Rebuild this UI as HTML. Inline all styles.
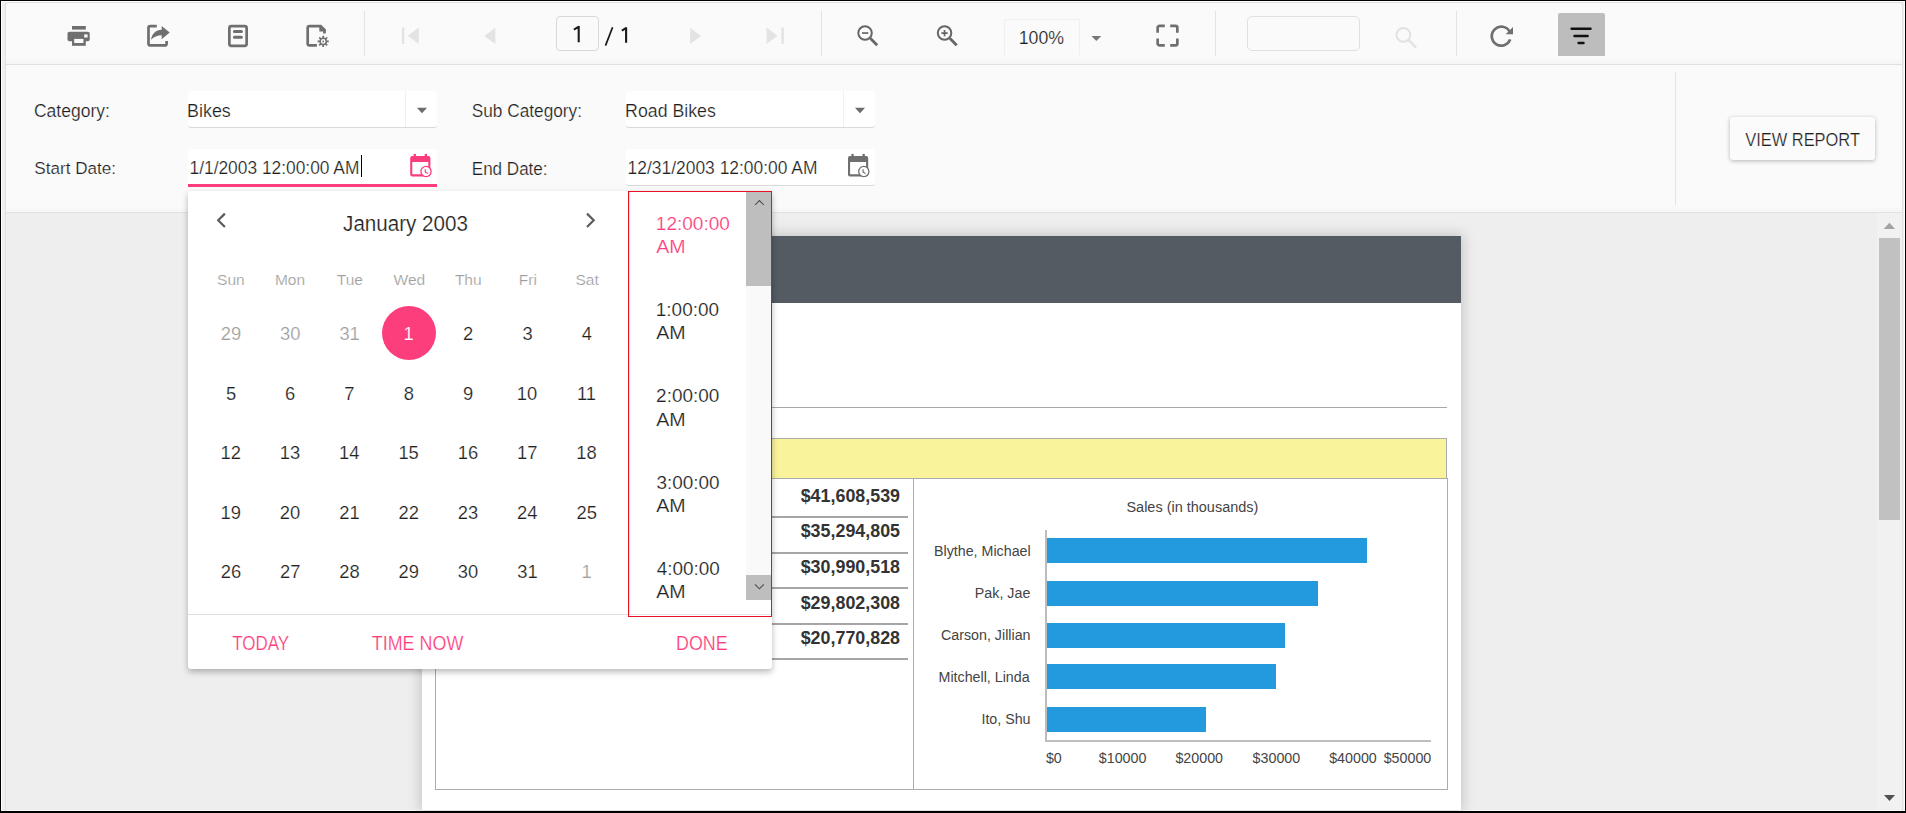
<!DOCTYPE html>
<html><head><meta charset="utf-8">
<style>
html,body{margin:0;padding:0}
body{width:1906px;height:813px;background:#000;position:relative;overflow:hidden;font-family:"Liberation Sans",sans-serif;color:#222}
.a{position:absolute}
.t{position:absolute;white-space:pre;line-height:1}
svg{position:absolute;overflow:visible}
.sep{position:absolute;width:1px;top:11px;height:45px;background:#e3e3e3}
</style></head><body>
<div class="a" style="left:1px;top:1px;width:1904px;height:810px;background:#fff"></div>
<div class="a" style="left:2px;top:2px;width:1902px;height:808px;background:#efefef"></div>
<div class="a" style="left:5px;top:2px;width:1896px;height:808px;border:1px solid #e0e0e0;border-bottom:0;border-radius:3px 3px 0 0;background:#fafafa"></div>
<div class="a" style="left:6px;top:58px;width:1896px;height:6px;background:linear-gradient(rgba(0,0,0,0),rgba(0,0,0,.025))"></div>
<div class="a" style="left:6px;top:64px;width:1896px;height:1px;background:#e0e0e0"></div>
<div class="a" style="left:6px;top:206px;width:1896px;height:6px;background:linear-gradient(rgba(0,0,0,0),rgba(0,0,0,.02))"></div>
<div class="a" style="left:6px;top:212px;width:1896px;height:1px;background:#e2e2e2"></div>
<div class="a" style="left:6px;top:213px;width:1896px;height:597px;background:#eeeeee"></div>
<!-- TOOLBAR CONTENT -->
<svg class="a" style="left:0;top:0" width="1906" height="70" viewBox="0 0 1906 70">
<g fill="#6f6f6f">
<!-- printer -->
<rect x="72" y="26" width="13.8" height="3.6"/>
<rect x="67.5" y="31.8" width="22.2" height="9.5" rx="1.8"/>
<rect x="72" y="38.5" width="13.8" height="7.3"/>
<rect x="74.2" y="38.9" width="9.2" height="4.1" fill="#fafafa"/>
<rect x="84.2" y="34.4" width="3.4" height="3.1" fill="#fafafa"/>
<!-- export arrow -->
<path d="M161.7,29.8 C156,30 152,33.5 151,39.8 C154,37 157.5,35.3 161.7,35.3 V39.3 L169.7,32.6 L161.7,25.9 Z"/>
</g>
<g fill="none" stroke="#6f6f6f" stroke-width="2.7">
<path d="M156.8,26.1 H150.1 a1.6,1.6 0 0 0 -1.6,1.6 V43.8 a1.6,1.6 0 0 0 1.6,1.6 H165 a1.6,1.6 0 0 0 1.6,-1.6 V41"/>
<rect x="229.35" y="26.05" width="17.3" height="19.8" rx="2"/>
<path d="M234.4,31.5 H241.4 M234.4,37.3 H241.4" stroke-width="3" stroke-linecap="round"/>
<path d="M316.9,45.45 H309.4 a1.7,1.7 0 0 1 -1.7,-1.7 V27.75 a1.7,1.7 0 0 1 1.7,-1.7 H320.6 L324.45,29.9 V33.6"/>
</g>
<path d="M319.3,25.5 L325.8,30.6 V31.6 H319.3 Z" fill="#6f6f6f"/>
<!-- gear -->
<g transform="translate(323.2,41.4)">
<circle r="5.2" fill="#fafafa"/>
<g stroke="#6f6f6f" stroke-width="1.7">
<path d="M0,-5.6 V-3.4 M0,5.6 V3.4 M-5.6,0 H-3.4 M5.6,0 H3.4 M-3.96,-3.96 L-2.4,-2.4 M3.96,3.96 L2.4,2.4 M-3.96,3.96 L-2.4,2.4 M3.96,-3.96 L2.4,-2.4"/>
</g>
<circle r="3.1" fill="none" stroke="#6f6f6f" stroke-width="1.5"/>
<circle r="0.9" fill="#6f6f6f"/>
</g>
<!-- nav disabled -->
<g fill="#e3e3e3">
<rect x="401.9" y="27.5" width="2.4" height="16.5"/>
<path d="M418.8,27.5 L407.8,35.75 L418.8,44 Z"/>
<path d="M495.4,27.8 L484.3,35.9 L495.4,44 Z"/>
<path d="M690.1,27.8 L701.2,35.9 L690.1,44 Z"/>
<path d="M766.5,27.5 L777.5,35.75 L766.5,44 Z"/>
<rect x="781.4" y="27.5" width="2.4" height="16.5"/>
</g>
<!-- zoom out / in -->
<g fill="none" stroke="#666" >
<circle cx="865.05" cy="33.05" r="6.75" stroke-width="2"/>
<path d="M862,33.05 H868.3" stroke-width="1.7"/>
<path d="M870.3,38.3 L877.2,45.2" stroke-width="2.8"/>
<circle cx="944.55" cy="33.05" r="6.75" stroke-width="2"/>
<path d="M941.4,33.05 H947.7 M944.55,29.9 V36.2" stroke-width="1.7"/>
<path d="M949.8,38.3 L956.7,45.2" stroke-width="2.8"/>
</g>
<!-- fit page -->
<g fill="none" stroke="#6f6f6f" stroke-width="2.7">
<path d="M1164.8,25.85 H1159.6 a1.95,1.95 0 0 0 -1.95,1.95 V32.8"/>
<path d="M1170.2,25.85 H1175.4 a1.95,1.95 0 0 1 1.95,1.95 V32.8"/>
<path d="M1164.8,45.35 H1159.6 a1.95,1.95 0 0 1 -1.95,-1.95 V38.4"/>
<path d="M1170.2,45.35 H1175.4 a1.95,1.95 0 0 0 1.95,-1.95 V38.4"/>
</g>
<!-- search -->
<g fill="none" stroke="#e2e2e2">
<circle cx="1403.4" cy="34.8" r="6.9" stroke-width="2"/>
<path d="M1408.6,40 L1416.2,47.6" stroke-width="2.4"/>
</g>
<!-- refresh -->
<path d="M1510.2,39.4 A9.5,9.5 0 1 1 1509.6,31.6" fill="none" stroke="#6f6f6f" stroke-width="2.7"/>
<path d="M1513,26.9 V34.2 H1505.7 Z" fill="#6f6f6f"/>
</svg>
<div class="sep" style="left:364px"></div>
<div class="sep" style="left:821px"></div>
<div class="sep" style="left:1215px"></div>
<div class="sep" style="left:1456px"></div>
<div class="a" style="left:556px;top:16px;width:41px;height:33px;border:1px solid #d9d9d9;border-radius:4px"></div>
<div class="a" style="left:1004px;top:19px;width:74px;height:35px;border:1px solid #efefef;border-bottom:0"></div>
<svg class="a" style="left:0;top:0" width="1906" height="70"><path d="M1091.5,36 H1101.2 L1096.35,40.9 Z" fill="#777"/></svg>
<div class="a" style="left:1247px;top:16px;width:111px;height:33px;border:1px solid #e0e0e0;border-radius:5px"></div>
<div class="a" style="left:1558px;top:13px;width:47px;height:43px;background:#bdbdbd;border-radius:2px 2px 0 0"></div>
<svg class="a" style="left:0;top:0" width="1906" height="70"><g stroke="#111" stroke-width="2.5" stroke-linecap="round"><path d="M1571.6,28.75 H1590.5 M1574.5,35.9 H1587.6 M1578.6,42.95 H1583.5"/></g></svg>


<svg class="a" style="left:0;top:0" width="10" height="10"><g fill="none" stroke="#1a1a1a" stroke-width="2.1"><path d="M578.7,26 V42.2 M578.9,26.6 L573.9,29.6"/><path d="M626.1,27.2 V42.8 M626.3,27.8 L621.9,30.6"/><path d="M612.6,27.3 L605.5,45.6" stroke-width="1.7"/></g></svg>
<div class="a" style="left:188px;top:91px;width:249px;height:36px;background:#fff;border-radius:3px;box-shadow:0 1px 0 #d9d9d9"></div>
<div class="a" style="left:405px;top:91px;width:1px;height:36px;background:#f0f0f0"></div>
<div class="a" style="left:626px;top:91px;width:249px;height:36px;background:#fff;border-radius:3px;box-shadow:0 1px 0 #d9d9d9"></div>
<div class="a" style="left:843px;top:91px;width:1px;height:36px;background:#f0f0f0"></div>
<svg class="a" style="left:0;top:0" width="10" height="10"><path d="M416.9,107.8 H427.1 L422,113.3 Z M854.9,107.8 H865.1 L860,113.3 Z" fill="#6d6d6d"/></svg>
<div class="a" style="left:188px;top:149px;width:249px;height:35px;background:#fff"></div>
<div class="a" style="left:188px;top:184px;width:249px;height:3px;background:#fc3d7b"></div>
<div class="a" style="left:626px;top:149px;width:249px;height:36px;background:#fff;border-radius:3px;box-shadow:0 1px 0 #d9d9d9"></div>
<div class="a" style="left:360.6px;top:155px;width:1.6px;height:22px;background:#000"></div>
<svg class="a" style="left:0;top:0" width="10" height="10"><g transform="translate(410.2,153.9)">
<rect x="3.4" y="0" width="2.3" height="3" fill="#fc3d7b"/><rect x="14.5" y="0" width="2.3" height="3" fill="#fc3d7b"/>
<path d="M2,2.1 H18.2 a2,2 0 0 1 2,2 V20.5 a2,2 0 0 1 -2,2 H2 a2,2 0 0 1 -2,-2 V4.1 a2,2 0 0 1 2,-2 Z M2.1,8.1 V20.4 H18.1 V8.1 Z" fill="#fc3d7b" fill-rule="evenodd"/>
<circle cx="15.8" cy="17.6" r="5.1" fill="#fff" stroke="#fc3d7b" stroke-width="1.3"/>
<path d="M15.1,15.3 V18.3 L17.6,19.6" fill="none" stroke="#fc3d7b" stroke-width="1.2"/>
</g></svg>

<svg class="a" style="left:0;top:0" width="10" height="10"><g transform="translate(848,153.9)">
<rect x="3.4" y="0" width="2.3" height="3" fill="#6f6f6f"/><rect x="14.5" y="0" width="2.3" height="3" fill="#6f6f6f"/>
<path d="M2,2.1 H18.2 a2,2 0 0 1 2,2 V20.5 a2,2 0 0 1 -2,2 H2 a2,2 0 0 1 -2,-2 V4.1 a2,2 0 0 1 2,-2 Z M2.1,8.1 V20.4 H18.1 V8.1 Z" fill="#6f6f6f" fill-rule="evenodd"/>
<circle cx="15.8" cy="17.6" r="5.1" fill="#fff" stroke="#6f6f6f" stroke-width="1.3"/>
<path d="M15.1,15.3 V18.3 L17.6,19.6" fill="none" stroke="#6f6f6f" stroke-width="1.2"/>
</g></svg>

<div class="a" style="left:1675px;top:72px;width:1px;height:133px;background:#e3e3e3"></div>
<div class="a" style="left:1730px;top:117px;width:145px;height:43px;background:#fbfbfb;border-radius:3px;box-shadow:0 1px 4px rgba(0,0,0,.28)"></div>
<div class="a" style="left:422px;top:236px;width:1039px;height:574px;background:#fff;box-shadow:0 0 12px 2px rgba(0,0,0,.17)"></div>
<div class="a" style="left:422px;top:236px;width:1039px;height:67px;background:#545b63"></div>
<div class="a" style="left:436px;top:407px;width:1011px;height:1px;background:#a8a8a8"></div>
<div class="a" style="left:435px;top:438px;width:1012px;height:41px;background:#f9f39b;border:1px solid #ababab;box-sizing:border-box"></div>
<div class="a" style="left:435px;top:478px;width:1013px;height:312px;border:1px solid #ababab;box-sizing:border-box"></div>
<div class="a" style="left:913px;top:479px;width:1px;height:311px;background:#ababab"></div>
<div class="a" style="left:440px;top:516px;width:468px;height:2px;background:#a6a6a6"></div>
<div class="a" style="left:440px;top:552px;width:468px;height:2px;background:#a6a6a6"></div>
<div class="a" style="left:440px;top:587px;width:468px;height:2px;background:#a6a6a6"></div>
<div class="a" style="left:440px;top:623px;width:468px;height:2px;background:#a6a6a6"></div>
<div class="a" style="left:440px;top:658px;width:468px;height:2px;background:#a6a6a6"></div>
<div class="a" style="left:1045px;top:530px;width:1.5px;height:211px;background:#bdbdbd"></div>
<div class="a" style="left:1045px;top:740px;width:386px;height:2px;background:#bdbdbd"></div>
<div class="a" style="left:1046.5px;top:538.3px;width:320.4px;height:25px;background:#2399de"></div>
<div class="a" style="left:1046.5px;top:580.5px;width:271.5px;height:25px;background:#2399de"></div>
<div class="a" style="left:1046.5px;top:622.7px;width:238.1px;height:25px;background:#2399de"></div>
<div class="a" style="left:1046.5px;top:664.4px;width:229.3px;height:25px;background:#2399de"></div>
<div class="a" style="left:1046.5px;top:706.6px;width:159.3px;height:25px;background:#2399de"></div>
<div class="a" style="left:1877px;top:213px;width:25px;height:597px;background:#f1f1f1"></div>
<div class="a" style="left:1879px;top:238px;width:21px;height:282px;background:#c1c1c1"></div>
<svg class="a" style="left:0;top:0" width="10" height="10"><path d="M1883.7,228.9 H1895.1 L1889.4,222.7 Z" fill="#a3a3a3"/><path d="M1884,795 H1895 L1889.5,801 Z" fill="#505050"/></svg>
<div class="a" style="left:188px;top:191px;width:584px;height:478px;background:#fff;border-radius:2px 2px 3px 3px;box-shadow:0 3px 6px rgba(0,0,0,.28)"></div>
<div class="a" style="left:188px;top:614px;width:584px;height:1px;background:#e0e0e0"></div>
<svg class="a" style="left:0;top:0" width="10" height="10"><g fill="none" stroke="#5c5c5c" stroke-width="2.2"><path d="M224.9,213.6 L218.2,220.3 L224.9,227"/><path d="M587,213.6 L593.7,220.3 L587,227"/></g></svg>
<div class="a" style="left:382px;top:306px;width:54px;height:54px;border-radius:50%;background:#fd3e7c"></div>
<div class="a" style="left:628px;top:191px;width:144px;height:426px;border:1px solid #e81123;box-sizing:border-box;background:#fff"></div>
<div class="a" style="left:629px;top:192px;width:1px;height:423px;background:#e4e4e4"></div>
<div class="a" style="left:629px;top:614px;width:142px;height:1px;background:#e4e4e4"></div>
<div class="a" style="left:746px;top:192px;width:25px;height:408px;background:#f9f9f9"></div>
<div class="a" style="left:746px;top:192px;width:25px;height:94px;background:#bebebe"></div>
<div class="a" style="left:746px;top:575px;width:25px;height:25px;background:#bebebe"></div>
<svg class="a" style="left:0;top:0" width="10" height="10"><g fill="none" stroke="#4a4a4a" stroke-width="1.05"><path d="M755,205 L759.4,200.6 L763.8,205"/><path d="M755,584.4 L759.4,588.8 L763.8,584.4"/></g></svg>
<span class="t" style="left:1018.69px;top:30.00px;font-size:17.73px;color:#1a1a1a;-webkit-text-stroke:0.2px #fff;transform:scaleY(1.035);transform-origin:0 14.00px">100%</span>
<span class="t" style="left:33.98px;top:103.00px;font-size:17.51px;color:#1f1f1f;-webkit-text-stroke:0.2px #fff;transform:scaleY(1.015);transform-origin:0 14.00px">Category:</span>
<span class="t" style="left:34.27px;top:160.00px;font-size:17.11px;color:#1f1f1f;-webkit-text-stroke:0.2px #fff;transform:scaleY(0.981);transform-origin:0 14.00px">Start Date:</span>
<span class="t" style="left:471.76px;top:103.00px;font-size:17.25px;color:#1f1f1f;-webkit-text-stroke:0.2px #fff;transform:scaleY(1.047);transform-origin:0 14.00px">Sub Category:</span>
<span class="t" style="left:471.77px;top:161.00px;font-size:17.06px;color:#1f1f1f;-webkit-text-stroke:0.2px #fff;transform:scaleY(1.125);transform-origin:0 14.00px">End Date:</span>
<span class="t" style="left:187.11px;top:103.00px;font-size:17.85px;color:#1f1f1f;-webkit-text-stroke:0.2px #fff;transform:scaleY(1.028);transform-origin:0 14.00px">Bikes</span>
<span class="t" style="left:625.11px;top:103.00px;font-size:17.74px;color:#1f1f1f;-webkit-text-stroke:0.2px #fff;transform:scaleY(1.026);transform-origin:0 14.00px">Road Bikes</span>
<span class="t" style="left:189.51px;top:160.00px;font-size:17.36px;color:#1f1f1f;-webkit-text-stroke:0.2px #fff;transform:scaleY(1.089);transform-origin:0 14.00px">1/1/2003 12:00:00 AM</span>
<span class="t" style="left:627.61px;top:160.00px;font-size:17.43px;color:#1f1f1f;-webkit-text-stroke:0.2px #fff;transform:scaleY(1.077);transform-origin:0 14.00px">12/31/2003 12:00:00 AM</span>
<span class="t" style="left:1745.20px;top:132.00px;font-size:16.45px;color:#1f1f1f;-webkit-text-stroke:0.2px #fff;transform:scaleY(1.141);transform-origin:0 14.00px">VIEW REPORT</span>
<span class="t" style="left:343.08px;top:214.00px;font-size:20.60px;color:#212121;-webkit-text-stroke:0.2px #fff;transform:scaleY(1.070);transform-origin:0 17.00px">January 2003</span>
<span class="t" style="left:217.12px;top:272.00px;font-size:15.54px;color:#9e9e9e;-webkit-text-stroke:0.2px #fff">Sun</span>
<span class="t" style="left:274.92px;top:272.00px;font-size:15.54px;color:#9e9e9e;-webkit-text-stroke:0.2px #fff">Mon</span>
<span class="t" style="left:336.75px;top:272.00px;font-size:15.54px;color:#9e9e9e;-webkit-text-stroke:0.2px #fff">Tue</span>
<span class="t" style="left:393.55px;top:272.00px;font-size:15.54px;color:#9e9e9e;-webkit-text-stroke:0.2px #fff">Wed</span>
<span class="t" style="left:454.88px;top:272.00px;font-size:15.54px;color:#9e9e9e;-webkit-text-stroke:0.2px #fff">Thu</span>
<span class="t" style="left:518.80px;top:272.00px;font-size:15.54px;color:#9e9e9e;-webkit-text-stroke:0.2px #fff">Fri</span>
<span class="t" style="left:575.52px;top:272.00px;font-size:15.54px;color:#9e9e9e;-webkit-text-stroke:0.2px #fff">Sat</span>
<span class="t" style="left:220.74px;top:325.00px;font-size:18.35px;color:#9e9e9e;-webkit-text-stroke:0.2px #fff">29</span>
<span class="t" style="left:279.94px;top:325.00px;font-size:18.35px;color:#9e9e9e;-webkit-text-stroke:0.2px #fff">30</span>
<span class="t" style="left:339.38px;top:325.00px;font-size:18.35px;color:#9e9e9e;-webkit-text-stroke:0.2px #fff">31</span>
<span class="t" style="left:403.50px;top:325.00px;font-size:18.35px;color:#ffffff;-webkit-text-stroke:0.2px #fd3e7c">1</span>
<span class="t" style="left:462.94px;top:325.00px;font-size:18.35px;color:#212121;-webkit-text-stroke:0.2px #fff">2</span>
<span class="t" style="left:522.38px;top:325.00px;font-size:18.35px;color:#212121;-webkit-text-stroke:0.2px #fff">3</span>
<span class="t" style="left:581.68px;top:325.00px;font-size:18.35px;color:#212121;-webkit-text-stroke:0.2px #fff">4</span>
<span class="t" style="left:225.98px;top:385.00px;font-size:18.35px;color:#212121;-webkit-text-stroke:0.2px #fff">5</span>
<span class="t" style="left:285.04px;top:385.00px;font-size:18.35px;color:#212121;-webkit-text-stroke:0.2px #fff">6</span>
<span class="t" style="left:344.34px;top:385.00px;font-size:18.35px;color:#212121;-webkit-text-stroke:0.2px #fff">7</span>
<span class="t" style="left:403.78px;top:385.00px;font-size:18.35px;color:#212121;-webkit-text-stroke:0.2px #fff">8</span>
<span class="t" style="left:462.94px;top:385.00px;font-size:18.35px;color:#212121;-webkit-text-stroke:0.2px #fff">9</span>
<span class="t" style="left:516.85px;top:385.00px;font-size:18.35px;color:#212121;-webkit-text-stroke:0.2px #fff">10</span>
<span class="t" style="left:576.98px;top:385.00px;font-size:18.35px;color:#212121;-webkit-text-stroke:0.2px #fff">11</span>
<span class="t" style="left:220.59px;top:444.00px;font-size:18.35px;color:#212121;-webkit-text-stroke:0.2px #fff">12</span>
<span class="t" style="left:279.79px;top:444.00px;font-size:18.35px;color:#212121;-webkit-text-stroke:0.2px #fff">13</span>
<span class="t" style="left:338.95px;top:444.00px;font-size:18.35px;color:#212121;-webkit-text-stroke:0.2px #fff">14</span>
<span class="t" style="left:398.39px;top:444.00px;font-size:18.35px;color:#212121;-webkit-text-stroke:0.2px #fff">15</span>
<span class="t" style="left:457.69px;top:444.00px;font-size:18.35px;color:#212121;-webkit-text-stroke:0.2px #fff">16</span>
<span class="t" style="left:516.99px;top:444.00px;font-size:18.35px;color:#212121;-webkit-text-stroke:0.2px #fff">17</span>
<span class="t" style="left:576.29px;top:444.00px;font-size:18.35px;color:#212121;-webkit-text-stroke:0.2px #fff">18</span>
<span class="t" style="left:220.59px;top:504.00px;font-size:18.35px;color:#212121;-webkit-text-stroke:0.2px #fff">19</span>
<span class="t" style="left:279.79px;top:504.00px;font-size:18.35px;color:#212121;-webkit-text-stroke:0.2px #fff">20</span>
<span class="t" style="left:339.24px;top:504.00px;font-size:18.35px;color:#212121;-webkit-text-stroke:0.2px #fff">21</span>
<span class="t" style="left:398.54px;top:504.00px;font-size:18.35px;color:#212121;-webkit-text-stroke:0.2px #fff">22</span>
<span class="t" style="left:457.84px;top:504.00px;font-size:18.35px;color:#212121;-webkit-text-stroke:0.2px #fff">23</span>
<span class="t" style="left:516.99px;top:504.00px;font-size:18.35px;color:#212121;-webkit-text-stroke:0.2px #fff">24</span>
<span class="t" style="left:576.44px;top:504.00px;font-size:18.35px;color:#212121;-webkit-text-stroke:0.2px #fff">25</span>
<span class="t" style="left:220.74px;top:563.00px;font-size:18.35px;color:#212121;-webkit-text-stroke:0.2px #fff">26</span>
<span class="t" style="left:279.94px;top:563.00px;font-size:18.35px;color:#212121;-webkit-text-stroke:0.2px #fff">27</span>
<span class="t" style="left:339.24px;top:563.00px;font-size:18.35px;color:#212121;-webkit-text-stroke:0.2px #fff">28</span>
<span class="t" style="left:398.54px;top:563.00px;font-size:18.35px;color:#212121;-webkit-text-stroke:0.2px #fff">29</span>
<span class="t" style="left:457.84px;top:563.00px;font-size:18.35px;color:#212121;-webkit-text-stroke:0.2px #fff">30</span>
<span class="t" style="left:517.28px;top:563.00px;font-size:18.35px;color:#212121;-webkit-text-stroke:0.2px #fff">31</span>
<span class="t" style="left:581.40px;top:563.00px;font-size:18.35px;color:#9e9e9e;-webkit-text-stroke:0.2px #fff">1</span>
<span class="t" style="left:232.13px;top:636.00px;font-size:17.02px;color:#fc3d7b;-webkit-text-stroke:0.2px #fff;transform:scaleY(1.204);transform-origin:0 14.00px">TODAY</span>
<span class="t" style="left:371.72px;top:636.00px;font-size:17.93px;color:#fc3d7b;-webkit-text-stroke:0.2px #fff;transform:scaleY(1.142);transform-origin:0 14.00px">TIME NOW</span>
<span class="t" style="left:676.00px;top:636.00px;font-size:17.91px;color:#fc3d7b;-webkit-text-stroke:0.2px #fff;transform:scaleY(1.159);transform-origin:0 14.00px">DONE</span>
<span class="t" style="left:655.81px;top:214.00px;font-size:19.05px;color:#fc3d7b;-webkit-text-stroke:0.2px #fff;transform:scaleY(0.926);transform-origin:0 16.00px">12:00:00</span>
<span class="t" style="left:656.20px;top:237.00px;font-size:19.61px;color:#fc3d7b;-webkit-text-stroke:0.2px #fff;transform:scaleY(0.899);transform-origin:0 16.00px">AM</span>
<span class="t" style="left:655.82px;top:301.00px;font-size:18.95px;color:#212121;-webkit-text-stroke:0.2px #fff;transform:scaleY(0.931);transform-origin:0 15.00px">1:00:00</span>
<span class="t" style="left:656.20px;top:323.00px;font-size:19.61px;color:#212121;-webkit-text-stroke:0.2px #fff;transform:scaleY(0.899);transform-origin:0 16.00px">AM</span>
<span class="t" style="left:656.11px;top:387.00px;font-size:18.95px;color:#212121;-webkit-text-stroke:0.2px #fff;transform:scaleY(0.931);transform-origin:0 15.00px">2:00:00</span>
<span class="t" style="left:656.20px;top:410.00px;font-size:19.61px;color:#212121;-webkit-text-stroke:0.2px #fff;transform:scaleY(0.899);transform-origin:0 16.00px">AM</span>
<span class="t" style="left:656.41px;top:474.00px;font-size:18.95px;color:#212121;-webkit-text-stroke:0.2px #fff;transform:scaleY(0.931);transform-origin:0 15.00px">3:00:00</span>
<span class="t" style="left:656.20px;top:496.00px;font-size:19.61px;color:#212121;-webkit-text-stroke:0.2px #fff;transform:scaleY(0.899);transform-origin:0 16.00px">AM</span>
<span class="t" style="left:656.70px;top:560.00px;font-size:18.95px;color:#212121;-webkit-text-stroke:0.2px #fff;transform:scaleY(0.931);transform-origin:0 15.00px">4:00:00</span>
<span class="t" style="left:656.20px;top:582.00px;font-size:19.61px;color:#212121;-webkit-text-stroke:0.2px #fff;transform:scaleY(0.899);transform-origin:0 16.00px">AM</span>
<span class="t" style="left:800.70px;top:488.00px;font-size:17.86px;color:#333;font-weight:700">$41,608,539</span>
<span class="t" style="left:800.70px;top:523.00px;font-size:17.86px;color:#333;font-weight:700">$35,294,805</span>
<span class="t" style="left:800.70px;top:559.00px;font-size:17.86px;color:#333;font-weight:700">$30,990,518</span>
<span class="t" style="left:800.70px;top:595.00px;font-size:17.86px;color:#333;font-weight:700">$29,802,308</span>
<span class="t" style="left:800.70px;top:630.00px;font-size:17.86px;color:#333;font-weight:700">$20,770,828</span>
<span class="t" style="left:934.02px;top:544.00px;font-size:14.26px;color:#444">Blythe, Michael</span>
<span class="t" style="left:974.87px;top:586.00px;font-size:14.26px;color:#444">Pak, Jae</span>
<span class="t" style="left:941.02px;top:628.00px;font-size:14.26px;color:#444">Carson, Jillian</span>
<span class="t" style="left:938.53px;top:670.00px;font-size:14.26px;color:#444">Mitchell, Linda</span>
<span class="t" style="left:981.43px;top:712.00px;font-size:14.26px;color:#444">Ito, Shu</span>
<span class="t" style="left:1045.90px;top:751.00px;font-size:14.28px;color:#444">$0</span>
<span class="t" style="left:1098.80px;top:751.00px;font-size:14.28px;color:#444">$10000</span>
<span class="t" style="left:1175.40px;top:751.00px;font-size:14.28px;color:#444">$20000</span>
<span class="t" style="left:1252.60px;top:751.00px;font-size:14.28px;color:#444">$30000</span>
<span class="t" style="left:1329.20px;top:751.00px;font-size:14.28px;color:#444">$40000</span>
<span class="t" style="left:1383.70px;top:751.00px;font-size:14.28px;color:#444">$50000</span>
<span class="t" style="left:1126.45px;top:500.00px;font-size:14.47px;color:#444">Sales (in thousands)</span>
</body></html>
